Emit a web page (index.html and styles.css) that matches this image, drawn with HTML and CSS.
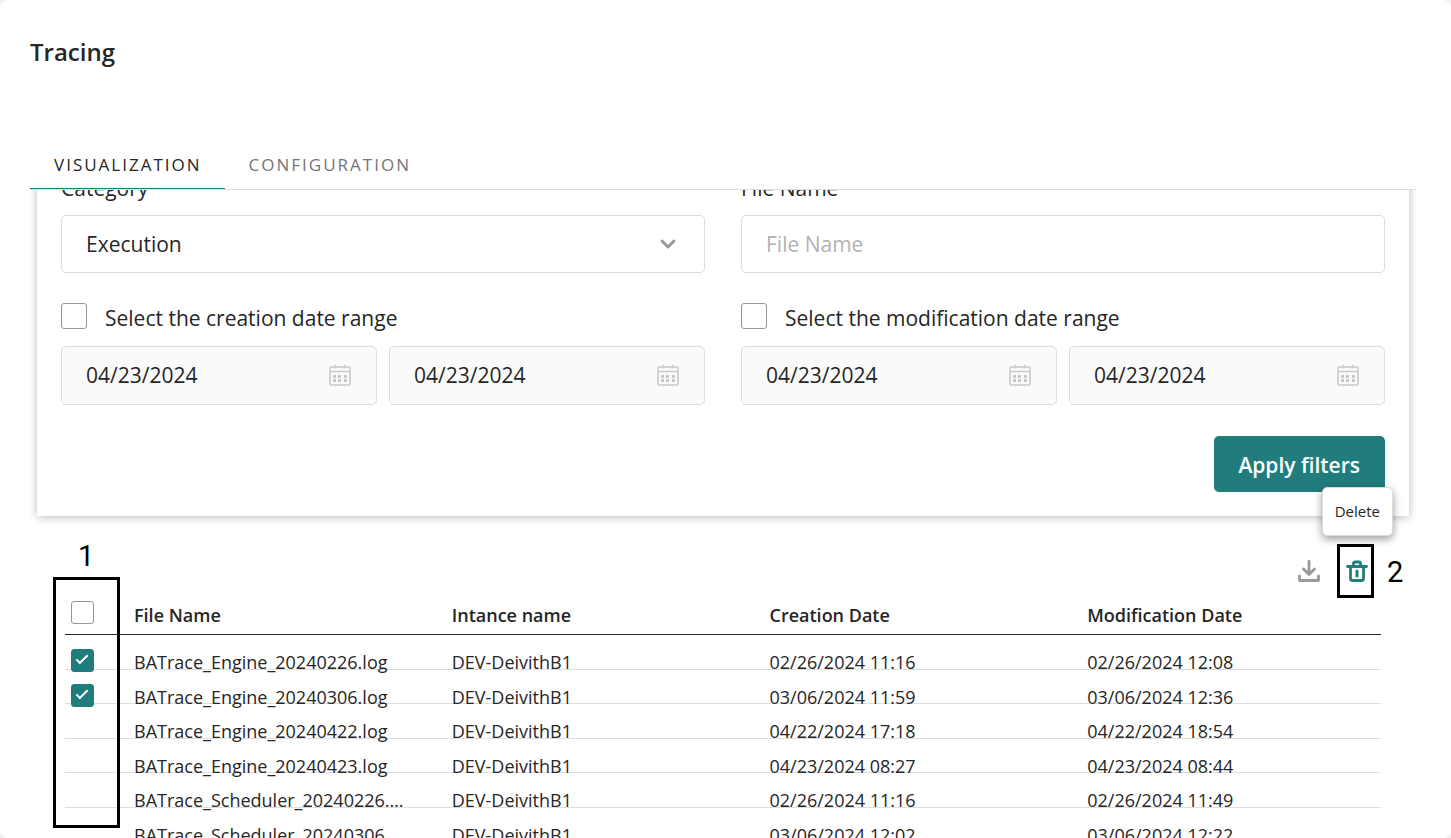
FILE: index.html
```html
<!DOCTYPE html>
<html lang="en">
<head>
<meta charset="utf-8">
<meta name="viewport" content="width=device-width, initial-scale=1">
<title>Tracing</title>
<link rel="stylesheet" href="styles.css">
</head>
<body>
<svg class="sprite" aria-hidden="true">
  <symbol id="calendar" viewBox="0 0 22 22">
    <rect x="1" y="3" width="20" height="18" rx="1" fill="none" stroke="currentColor" stroke-width="1.5"/>
    <path d="M1 7.500h20M6 0.500v4M15.500 0.500v4" fill="none" stroke="currentColor" stroke-width="1.300"/>
    <path d="M4 11h3v3H4zM9 11h3v3H9zM15 11h3v3h-3zM4 15h3v3H4zM9 15h3v3H9zM15 15h3v3h-3z" fill="currentColor"/>
  </symbol>
</svg>
<main class="page">
  <h1 class="title">Tracing</h1>
  <div class="tabs" role="tablist">
    <button class="tab tab-active" type="button" role="tab" aria-selected="true">VISUALIZATION</button>
    <button class="tab" type="button" role="tab" aria-selected="false">CONFIGURATION</button>
  </div>
  <div class="content">
    <form class="panel">
      <div class="filters">
        <div class="field">
          <label class="label" for="category">Category</label>
          <div class="control">
            <select class="input" id="category"><option>Execution</option></select>
            <svg class="control-icon chevron" viewBox="0 0 22 22" aria-hidden="true"><path d="M5 8l6 6 6-6" fill="none" stroke="currentColor" stroke-width="3" stroke-linecap="round" stroke-linejoin="round"/></svg>
          </div>
        </div>
        <div class="field">
          <label class="label" for="filename">File Name</label>
          <div class="control"><input class="input" id="filename" type="text" placeholder="File Name"></div>
        </div>
        <div class="range">
          <label class="check-label"><input class="check check-large" type="checkbox"><span>Select the creation date range</span></label>
          <div class="dates">
            <div class="control"><input class="input date" type="text" value="04/23/2024" aria-label="Created from" readonly><svg class="control-icon"><use href="#calendar"/></svg></div>
            <div class="control"><input class="input date" type="text" value="04/23/2024" aria-label="Created to" readonly><svg class="control-icon"><use href="#calendar"/></svg></div>
          </div>
        </div>
        <div class="range">
          <label class="check-label"><input class="check check-large" type="checkbox"><span>Select the modification date range</span></label>
          <div class="dates">
            <div class="control"><input class="input date" type="text" value="04/23/2024" aria-label="Modified from" readonly><svg class="control-icon"><use href="#calendar"/></svg></div>
            <div class="control"><input class="input date" type="text" value="04/23/2024" aria-label="Modified to" readonly><svg class="control-icon"><use href="#calendar"/></svg></div>
          </div>
        </div>
      </div>
      <div class="actions"><button class="apply" type="button">Apply filters</button></div>
    </form>
    <div class="toolbar">
      <button class="tool" type="button" aria-label="Download">
        <svg class="tool-icon" viewBox="0 0 22 22" aria-hidden="true"><path d="M11 1.500v12M5.500 9l5.500 5.500L16.500 9M1.500 16v4.500h19V16" fill="none" stroke="currentColor" stroke-width="2.800" stroke-linecap="round" stroke-linejoin="round"/></svg>
      </button>
      <div class="tool-wrap">
        <button class="tool tool-delete" type="button" aria-label="Delete">
          <svg class="tool-icon" viewBox="0 0 22 22" aria-hidden="true"><path d="M1.500 6.500h19M7.500 6V3.500q0-1.500 1.500-1.500h4q1.500 0 1.500 1.500V6M4.500 7v11.500q0 2 2 2h9q2 0 2-2V7" fill="none" stroke="currentColor" stroke-width="2.800" stroke-linecap="round"/><path d="M11 11v5" stroke="currentColor" stroke-width="3" stroke-linecap="round"/></svg>
        </button>
        <span class="tooltip" role="tooltip">Delete</span>
        <span class="mark mark-delete"></span>
        <span class="mark-number number-two">2</span>
      </div>
    </div>
    <div class="table-wrap">
      <table class="table">
        <thead>
          <tr><th class="col-check"><input class="check" type="checkbox" aria-label="Select all files"></th><th>File Name</th><th>Intance name</th><th>Creation Date</th><th>Modification Date</th></tr>
        </thead>
        <tbody>
          <tr><td class="col-check"><div class="cell"><input class="check" type="checkbox" aria-label="Select file" checked></div></td><td><div class="cell"><span>BATrace_Engine_20240226.log</span></div></td><td><div class="cell"><span>DEV-DeivithB1</span></div></td><td><div class="cell"><span>02/26/2024 11:16</span></div></td><td><div class="cell"><span>02/26/2024 12:08</span></div></td></tr>
          <tr><td class="col-check"><div class="cell"><input class="check" type="checkbox" aria-label="Select file" checked></div></td><td><div class="cell"><span>BATrace_Engine_20240306.log</span></div></td><td><div class="cell"><span>DEV-DeivithB1</span></div></td><td><div class="cell"><span>03/06/2024 11:59</span></div></td><td><div class="cell"><span>03/06/2024 12:36</span></div></td></tr>
          <tr><td class="col-check"></td><td><div class="cell"><span>BATrace_Engine_20240422.log</span></div></td><td><div class="cell"><span>DEV-DeivithB1</span></div></td><td><div class="cell"><span>04/22/2024 17:18</span></div></td><td><div class="cell"><span>04/22/2024 18:54</span></div></td></tr>
          <tr><td class="col-check"></td><td><div class="cell"><span>BATrace_Engine_20240423.log</span></div></td><td><div class="cell"><span>DEV-DeivithB1</span></div></td><td><div class="cell"><span>04/23/2024 08:27</span></div></td><td><div class="cell"><span>04/23/2024 08:44</span></div></td></tr>
          <tr><td class="col-check"></td><td><div class="cell"><span>BATrace_Scheduler_20240226.log</span></div></td><td><div class="cell"><span>DEV-DeivithB1</span></div></td><td><div class="cell"><span>02/26/2024 11:16</span></div></td><td><div class="cell"><span>02/26/2024 11:49</span></div></td></tr>
          <tr><td class="col-check"></td><td><div class="cell"><span>BATrace_Scheduler_20240306.log</span></div></td><td><div class="cell"><span>DEV-DeivithB1</span></div></td><td><div class="cell"><span>03/06/2024 12:02</span></div></td><td><div class="cell"><span>03/06/2024 12:22</span></div></td></tr>
        </tbody>
      </table>
      <span class="mark mark-column"></span>
      <span class="mark-number number-one">1</span>
    </div>
  </div>
</main>
</body>
</html>
```
FILE: styles.css
```css
* { box-sizing: border-box; }

body {
  margin: 0;
  background: #f0f0f0;
  color: #262626;
  font-family: "Open Sans", "Noto Sans", sans-serif;
  font-size: 18px;
}

button, input, select { font: inherit; color: inherit; }
button { cursor: pointer; }

.sprite { display: none; }

.page {
  display: flex;
  flex-direction: column;
  height: 100vh;
  padding: 34px 35px 0 30px;
  border-radius: 8px;
  background: #fff;
  overflow: hidden;
}

.title {
  margin: 0 0 70px;
  font-size: 24px;
  font-weight: 600;
  line-height: 36px;
}

.tabs {
  display: flex;
  flex: none;
  border-bottom: 1px solid #dedede;
}

.tab {
  height: 49px;
  padding: 0 23px 0 24px;
  border: 0;
  background: none;
  color: #757575;
  font-size: 17px;
  letter-spacing: 2px;
}

.tab-active {
  border-bottom: 1px solid #217d7d;
  color: #262626;
}

.content {
  flex: 1;
  min-height: 0;
  padding: 0 7px;
  overflow: hidden;
}

/* Scrolled so that the field labels pass under the tab bar. */
.panel {
  margin-top: -40px;
  padding: 24px;
  background: #fff;
  box-shadow: 0 1px 9px rgba(0, 0, 0, 0.27);
}

.filters {
  display: grid;
  grid-template-columns: 1fr 1fr;
  gap: 30px 36px;
}

.label {
  display: block;
  margin-bottom: 12px;
  font-size: 21px;
  line-height: 29px;
}

.control { position: relative; }

.input {
  display: block;
  width: 100%;
  height: 58px;
  padding: 0 24px;
  border: 1px solid #dcdcdc;
  border-radius: 5px;
  outline: 0;
  background: #fff;
  font-size: 21px;
  appearance: none;
}

.input::placeholder { color: #b3b3b3; }

.date {
  height: 59px;
  padding-bottom: 1px;
  background: #fafafa;
}

.control-icon {
  position: absolute;
  top: 18px;
  right: 26px;
  width: 22px;
  height: 22px;
  color: #c8c8c8;
  pointer-events: none;
}

.chevron { color: #999; }

.check-label {
  display: flex;
  gap: 18px;
  margin-bottom: 13px;
  font-size: 21px;
  line-height: 30px;
}

.dates {
  display: grid;
  grid-template-columns: 1fr 1fr;
  gap: 12px;
}

.check {
  display: block;
  flex: none;
  width: 23px;
  height: 23px;
  margin: 0;
  border: 1px solid #959595;
  border-radius: 3px;
  background: #fff;
  appearance: none;
}

.check-large { width: 26px; height: 26px; }

.check:checked {
  border-color: #217d7d;
  background: #217d7d;
}

.check:checked::before {
  content: "";
  display: block;
  width: 4px;
  height: 10px;
  margin: 2px 0 0 7px;
  border: solid #fff;
  border-width: 0 2px 2px 0;
  transform: rotate(45deg);
}

.actions {
  display: flex;
  justify-content: flex-end;
  margin-top: 31px;
}

.apply {
  height: 56px;
  padding: 2px 25px 0 24px;
  border: 0;
  border-radius: 5px;
  background: #217d7d;
  color: #fff;
  font-size: 21px;
  font-weight: 600;
}

.toolbar {
  display: flex;
  justify-content: flex-end;
  gap: 26px;
  margin: 44px 41px 0 0;
}

.tool {
  display: block;
  padding: 0;
  border: 0;
  background: none;
  color: #999;
}

.tool-delete { color: #217d7d; }
.tool-icon { display: block; width: 22px; height: 22px; }
.tool-wrap { position: relative; }

.tooltip {
  position: absolute;
  right: -25px;
  bottom: 46px;
  padding: 12px;
  border: 1px solid #dcdcdc;
  border-radius: 5px;
  background: #fff;
  box-shadow: 0 3px 9px rgba(0, 0, 0, 0.4);
  font-size: 15px;
  line-height: 23px;
}

/* Numbered callouts */
.mark {
  position: absolute;
  border: 3px solid #000;
  pointer-events: none;
}

.mark-delete { top: -16px; left: -9px; width: 37px; height: 54px; }
.mark-column { top: -5px; left: -12px; width: 67px; height: 251px; }

.mark-number {
  position: absolute;
  color: #000;
  font-family: Roboto, "Liberation Sans", sans-serif;
  font-size: 29px;
  line-height: 30px;
}

.number-two { top: -3px; left: 41px; }
.number-one { top: -41px; left: 13px; }

.table-wrap {
  position: relative;
  margin: 0 28px;
}

.table {
  width: 100%;
  border-collapse: separate;
  border-spacing: 0;
  table-layout: fixed;
  text-align: left;
}

.table th {
  height: 53px;
  padding: 14px 24px 0;
  border-bottom: 1px solid #262626;
  font-weight: 600;
  line-height: 24px;
}

.table td {
  padding: 0 24px;
  border-bottom: 1px solid #dedede;
}

.table .col-check { width: 45px; padding-right: 0; padding-left: 6px; }
.table th.col-check { padding-top: 8px; }

/* Rows are denser than their text, which runs over the divider. */
.cell { height: 34px; padding-top: 14px; }
.table tbody tr:nth-child(even) .cell { height: 33px; }

.cell span {
  display: block;
  overflow: hidden;
  line-height: 27px;
  text-overflow: ellipsis;
  white-space: nowrap;
}
```
